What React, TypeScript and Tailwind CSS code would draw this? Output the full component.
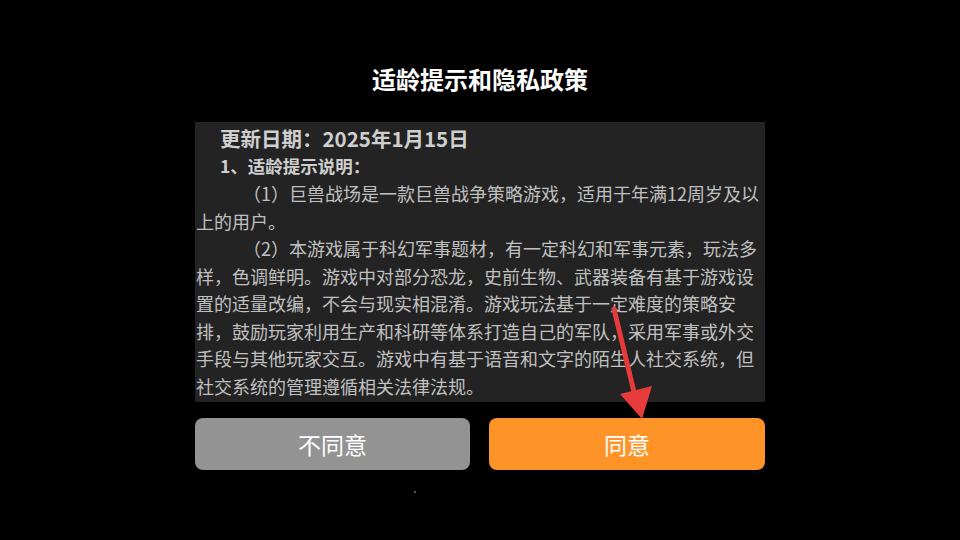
import React from 'react'

const font = { fontFamily: '"Noto Sans CJK SC", "Noto Sans", sans-serif' }

// text is laid out line by line to keep the wrap of the original
const lines: { text: string; indent?: boolean }[] = [
  { text: '（1）巨兽战场是一款巨兽战争策略游戏，适用于年满12周岁及以', indent: true },
  { text: '上的用户。' },
  { text: '（2）本游戏属于科幻军事题材，有一定科幻和军事元素，玩法多', indent: true },
  { text: '样，色调鲜明。游戏中对部分恐龙，史前生物、武器装备有基于游戏设' },
  { text: '置的适量改编，不会与现实相混淆。游戏玩法基于一定难度的策略安' },
  { text: '排，鼓励玩家利用生产和科研等体系打造自己的军队，采用军事或外交' },
  { text: '手段与其他玩家交互。游戏中有基于语音和文字的陌生人社交系统，但' },
  { text: '社交系统的管理遵循相关法律法规。' },
  { text: '（3）本游戏有用户实名认证系统，认证为未成年人的用户将接受以', indent: true },
]

function Arrow() {
  return (
    <svg
      className="absolute left-0 top-0 pointer-events-none"
      width="960"
      height="540"
      viewBox="0 0 960 540"
    >
      <line x1="614" y1="309" x2="634" y2="392" stroke="#e53b3b" strokeWidth="5" strokeLinecap="round" />
      <polygon points="620,394 652,386 642,419" fill="#e53b3b" />
    </svg>
  )
}

export default function App() {
  return (
    <div className="relative w-[960px] h-[540px] bg-black flex flex-col items-center overflow-hidden" style={font}>
      <h1 className="mt-[62px] h-[34px] leading-[34px] text-[24px] font-bold text-white">
        适龄提示和隐私政策
      </h1>

      <div className="mt-[26px] w-[570px] h-[280px] bg-[#232323] overflow-hidden pt-[2px]">
        <div className="pl-[25px] h-[28px] leading-[28px] text-[20.5px] font-bold text-[#cfcfcf]">
          更新日期：2025年1月15日
        </div>
        <div className="pl-[25px] h-[28px] leading-[28px] text-[17.5px] font-bold text-[#cfcfcf]">
          1、适龄提示说明：
        </div>
        <div className="text-[18px] leading-[27.5px] text-[#c0c0c0]">
          {lines.map((l, i) => (
            <div key={i} className={l.indent ? 'whitespace-nowrap pl-[48px]' : 'whitespace-nowrap pl-[1px]'}>
              {l.text}
            </div>
          ))}
        </div>
      </div>

      <div className="mt-[16px] flex gap-[19px]">
        <button className="w-[275px] h-[52px] rounded-[8px] bg-[#939393] text-white text-[23px]">
          不同意
        </button>
        <button className="w-[276px] h-[52px] rounded-[8px] bg-[#fe9428] text-white text-[23px]">
          同意
        </button>
      </div>

      <div className="mt-[21px] -ml-[130px] w-[2px] h-[2px] bg-[#555]" />

      <Arrow />
    </div>
  )
}
